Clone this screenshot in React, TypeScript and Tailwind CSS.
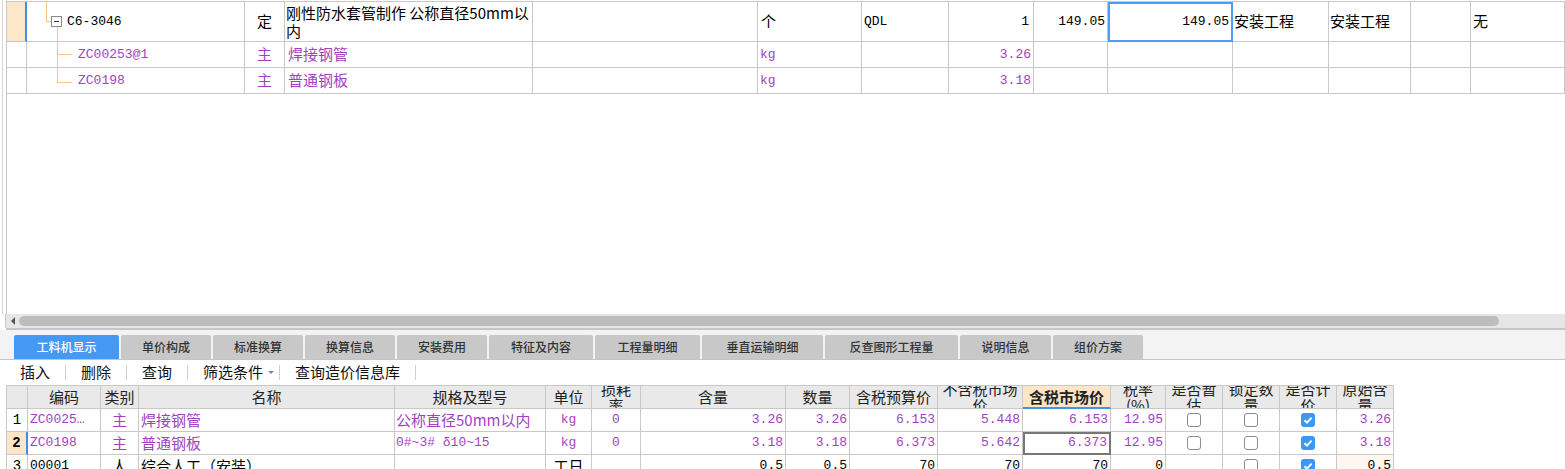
import React from "react";

const CN = "font-['Noto_Sans_CJK_SC',sans-serif]";
const MONO = "font-['Liberation_Mono','Noto_Sans_CJK_SC',monospace]";
const PURPLE = "text-[#a33fc1]";

const topGrid =
  "grid grid-cols-[20px_218px_40px_248px_225px_104px_87px_85px_74px_125px_96px_82px_60px_1fr]";
const botGrid =
  "grid grid-cols-[21px_73px_38px_256px_151px_46px_49px_145px_64px_88px_85px_88px_55px_57px_57px_57px_57px]";
const cell = "border-r border-b border-[#c8c8c8] flex items-center overflow-hidden whitespace-nowrap";
const tree = "absolute bg-[#f6c58c]";

const tabs = [
  { label: "工料机显示", w: "w-[105px]", active: true },
  { label: "单价构成", w: "w-[90px]" },
  { label: "标准换算", w: "w-[90px]" },
  { label: "换算信息", w: "w-[90px]" },
  { label: "安装费用", w: "w-[90px]" },
  { label: "特征及内容", w: "w-[104px]" },
  { label: "工程量明细", w: "w-[105px]" },
  { label: "垂直运输明细", w: "w-[121px]" },
  { label: "反查图形工程量", w: "w-[133px]" },
  { label: "说明信息", w: "w-[91px]" },
  { label: "组价方案", w: "w-[90px]" },
];

const headers: { t: React.ReactNode; hot?: boolean }[] = [
  { t: "" },
  { t: "编码" },
  { t: "类别" },
  { t: "名称" },
  { t: "规格及型号" },
  { t: "单位" },
  { t: <>损耗<br />率</> },
  { t: "含量" },
  { t: "数量" },
  { t: "含税预算价" },
  { t: <>不含税市场<br />价</> },
  { t: "含税市场价", hot: true },
  { t: <>税率<br />(%)</> },
  { t: <>是否暂<br />估</> },
  { t: <>锁定数<br />量</> },
  { t: <>是否计<br />价</> },
  { t: <>原始含<br />量</> },
];

function Box({ on }: { on?: boolean }) {
  if (on)
    return (
      <span className="w-[14px] h-[14px] rounded-[3px] bg-[#3d97f5] flex items-center justify-center">
        <svg width="10" height="10" viewBox="0 0 10 10">
          <path d="M1.5 5.2 L4 7.6 L8.6 2.6" stroke="white" strokeWidth="1.9" fill="none" />
        </svg>
      </span>
    );
  return <span className="w-[14px] h-[14px] rounded-[3px] border border-[#8c8c8c] bg-white" />;
}

type Row = {
  n: string;
  code: string;
  kind: string;
  name: string;
  spec: string;
  specMono?: boolean;
  unit: string;
  loss: string;
  qty: string;
  num: string;
  budget: string;
  mkt: string;
  mktTax: string;
  rate: string;
  est: boolean | null;
  lock: boolean;
  priced: boolean;
  orig: string;
  purple: boolean;
  current?: boolean;
};

const rows: Row[] = [
  { n: "1", code: "ZC0025…", kind: "主", name: "焊接钢管", spec: "公称直径50mm以内", unit: "kg", loss: "0", qty: "3.26", num: "3.26", budget: "6.153", mkt: "5.448", mktTax: "6.153", rate: "12.95", est: false, lock: false, priced: true, orig: "3.26", purple: true },
  { n: "2", code: "ZC0198", kind: "主", name: "普通钢板", spec: "0#~3# δ10~15", specMono: true, unit: "kg", loss: "0", qty: "3.18", num: "3.18", budget: "6.373", mkt: "5.642", mktTax: "6.373", rate: "12.95", est: false, lock: false, priced: true, orig: "3.18", purple: true, current: true },
  { n: "3", code: "00001", kind: "人", name: "综合人工（安装）", spec: "", unit: "工日", loss: "", qty: "0.5", num: "0.5", budget: "70", mkt: "70", mktTax: "70", rate: "0", est: null, lock: false, priced: true, orig: "0.5", purple: false },
];

function TopTable() {
  return (
    <div className="border-t border-[#c8c8c8] mt-[1px] text-black">
      {/* 定额行 */}
      <div className={`${topGrid} h-[40px]`}>
        <div className={`${cell} bg-[#fde7cb] border-r-2 border-r-[#3d8ef0]`} />
        <div className={`${cell} relative pl-[40px] ${MONO} text-[13px]`}>
          <span className={`${tree} left-[19px] top-[-3px] w-px h-[22px]`} />
          <span className={`${tree} left-[19px] top-[19px] w-[5px] h-px`} />
          <span className="absolute left-[24px] top-[14px] w-[11px] h-[11px] border border-[#8a8a8a] bg-white flex items-center justify-center">
            <span className="w-[5px] h-px bg-[#333]" />
          </span>
          <span className={`${tree} left-[30px] top-[25px] w-px bottom-[-1px]`} />
          C6-3046
        </div>
        <div className={`${cell} justify-center ${CN} text-[15px]`}>定</div>
        <div className={`${cell} pl-[1px] ${CN} text-[15px] leading-[18px]`}>
          <span className="whitespace-normal">刚性防水套管制作 公称直径50mm以内</span>
        </div>
        <div className={cell} />
        <div className={`${cell} pl-[3px] ${CN} text-[15px]`}>个</div>
        <div className={`${cell} pl-[2px] ${MONO} text-[13px]`}>QDL</div>
        <div className={`${cell} justify-end pr-[4px] ${MONO} text-[13px]`}>1</div>
        <div className={`${cell} justify-end pr-[2px] ${MONO} text-[13px]`}>149.05</div>
        <div className={`${cell} justify-end pr-[3px] ${MONO} text-[13px] outline-2 outline-[#4b9df5] -outline-offset-2`}>
          149.05
        </div>
        <div className={`${cell} pl-[1px] ${CN} text-[15px]`}>安装工程</div>
        <div className={`${cell} pl-[1px] ${CN} text-[15px]`}>安装工程</div>
        <div className={cell} />
        <div className={`${cell} pl-[2px] ${CN} text-[15px]`}>无</div>
      </div>

      {[
        { code: "ZC00253@1", name: "焊接钢管", q: "3.26", last: false },
        { code: "ZC0198", name: "普通钢板", q: "3.18", last: true },
      ].map((r) => (
        <div key={r.code} className={`${topGrid} h-[26px]`}>
          <div className={cell} />
          <div className={`${cell} relative pl-[51px] ${MONO} text-[13px] ${PURPLE}`}>
            {r.last ? (
              <span className={`${tree} left-[30px] top-0 w-px h-[14px]`} />
            ) : (
              <span className={`${tree} left-[30px] top-0 w-px bottom-[-1px]`} />
            )}
            <span className={`${tree} left-[30px] ${r.last ? "top-[14px]" : "top-[12px]"} w-[15px] h-px`} />
            {r.code}
          </div>
          <div className={`${cell} justify-center ${CN} text-[15px] ${PURPLE}`}>主</div>
          <div className={`${cell} px-[3px] ${CN} text-[15px] ${PURPLE}`}>{r.name}</div>
          <div className={cell} />
          <div className={`${cell} pl-[2px] ${MONO} text-[13px] ${PURPLE}`}>kg</div>
          <div className={cell} />
          <div className={`${cell} justify-end pr-[2px] ${MONO} text-[13px] ${PURPLE}`}>{r.q}</div>
          <div className={cell} />
          <div className={cell} />
          <div className={cell} />
          <div className={cell} />
          <div className={cell} />
          <div className={cell} />
        </div>
      ))}
    </div>
  );
}

function BottomTable() {
  const num = `${cell} justify-end pr-[2px] ${MONO} text-[13px]`;
  const mid = `${cell} justify-center`;
  return (
    <div className="ml-[6px] w-[1388px] border-l border-t border-[#c8c8c8]">
      <div className={`${botGrid} h-[23px]`}>
        {headers.map((h, i) => (
          <div
            key={i}
            className={`${cell} justify-center text-center px-[2px] ${CN} leading-[16px] ${
              h.hot
                ? "bg-[#fde5c5] text-[15px] font-bold text-[#222] border-b-2 border-b-[#3d95f0]"
                : "bg-[#e9e9e9] text-[15px] text-[#222]"
            }`}
          >
            <span>{h.t}</span>
          </div>
        ))}
      </div>
      {rows.map((r) => {
        const c = r.purple ? PURPLE : "text-black";
        return (
          <div key={r.n} className={`${botGrid} h-[23px]`}>
            <div
              className={`${mid} ${MONO} text-[14px] text-black ${
                r.current ? "bg-[#fde6c8] font-bold border-r-2 border-r-[#3d8ef0]" : ""
              }`}
            >
              {r.n}
            </div>
            <div className={`${cell} pl-[2px] ${MONO} text-[13px] ${c}`}>{r.code}</div>
            <div className={`${mid} ${CN} text-[15px] ${c}`}>{r.kind}</div>
            <div className={`${cell} pl-[2px] ${CN} text-[15px] ${c}`}>{r.name}</div>
            <div className={`${cell} pl-[1px] ${r.specMono ? `${MONO} text-[13px]` : `${CN} text-[15px]`} ${c}`}>
              {r.spec}
            </div>
            <div className={`${mid} ${r.unit === "kg" ? `${MONO} text-[13px]` : `${CN} text-[15px]`} ${c}`}>{r.unit}</div>
            <div className={`${mid} ${MONO} text-[13px] ${c}`}>{r.loss}</div>
            <div className={`${num} ${c}`}>{r.qty}</div>
            <div className={`${num} ${c}`}>{r.num}</div>
            <div className={`${num} ${c}`}>{r.budget}</div>
            <div className={`${num} ${c}`}>{r.mkt}</div>
            <div
              className={`${num} ${c} ${r.current ? "outline-2 outline-[#777777] -outline-offset-2 pr-[3px]" : ""}`}
            >
              {r.mktTax}
            </div>
            <div className={`${num} ${c}`}>{r.rate}</div>
            <div className={mid}>{r.est !== null && <Box on={r.est} />}</div>
            <div className={mid}>
              <Box on={r.lock} />
            </div>
            <div className={mid}>
              <Box on={r.priced} />
            </div>
            <div className={`${num} ${c} ${r.purple ? "" : "bg-[#fdf7ef]"}`}>{r.orig}</div>
          </div>
        );
      })}
    </div>
  );
}

export default function App() {
  return (
    <div className={`w-[1565px] h-[469px] overflow-hidden bg-white flex flex-col ${CN}`}>
      {/* 上方清单区 */}
      <div className="flex h-[314px] shrink-0">
        <div className="w-[6px] flex">
          <div className="ml-[2px] w-px bg-[#d4d4d4]" />
        </div>
        <div className="flex-1 border-l border-[#c8c8c8]">
          <TopTable />
        </div>
      </div>

      {/* 横向滚动条 */}
      <div className="flex h-[14px] shrink-0">
        <div className="w-[6px] border-r border-[#c8c8c8]" />
        <div className="flex-1 bg-[#e6e6e6] flex items-center">
          <span className="ml-[5px] w-0 h-0 border-y-[4px] border-y-transparent border-r-[4px] border-r-[#555]" />
          <span className="ml-[4px] w-[1480px] h-[10px] rounded-full bg-[#bdbdbd]" />
        </div>
      </div>
      <div className="h-[2px] ml-[6px] bg-[#c6c6c6] shrink-0" />

      {/* 页签 */}
      <div className="h-[30px] shrink-0 bg-[#f3f3f3] border-b border-[#c4c4c4] flex items-end pl-[14px] gap-[2px]">
        {tabs.map((t) => (
          <div
            key={t.label}
            className={`${t.w} h-[24px] rounded-t-[2px] flex items-center justify-center text-[12px] font-medium ${
              t.active ? "bg-[#4499f5] text-white" : "bg-[#c8c8c8] text-[#333]"
            }`}
          >
            {t.label}
          </div>
        ))}
      </div>

      {/* 工具栏 */}
      <div className="h-[25px] shrink-0 flex items-center pl-[20px] text-[15px] text-[#111]">
        <span>插入</span>
        <span className="mx-[15px] w-px h-[15px] bg-[#d0d0d0]" />
        <span>删除</span>
        <span className="mx-[15px] w-px h-[15px] bg-[#d0d0d0]" />
        <span>查询</span>
        <span className="mx-[15px] w-px h-[15px] bg-[#d0d0d0]" />
        <span>筛选条件</span>
        <span className="ml-[5px] w-0 h-0 border-x-[3px] border-x-transparent border-t-[3px] border-t-[#888]" />
        <span className="ml-[5px] mr-[15px] w-px h-[15px] bg-[#d0d0d0]" />
        <span>查询造价信息库</span>
        <span className="ml-[15px] w-px h-[15px] bg-[#d0d0d0]" />
      </div>

      {/* 工料机明细 */}
      <BottomTable />
    </div>
  );
}
